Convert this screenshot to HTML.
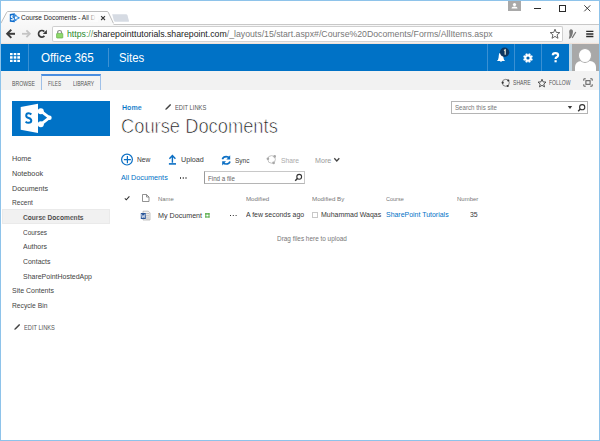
<!DOCTYPE html>
<html><head><meta charset="utf-8">
<style>
html,body{margin:0;padding:0;}
body{width:600px;height:441px;overflow:hidden;position:relative;background:#fff;font-family:"Liberation Sans",sans-serif;}
.a{position:absolute;}
.t{position:absolute;white-space:nowrap;line-height:1;transform-origin:0 0;}
</style></head><body>

<!-- window controls -->
<div class="a" style="left:508px;top:1px;width:13px;height:10px;background:#a9a9a9;"></div>
<svg class="a" style="left:508px;top:1px" width="13" height="10" viewBox="0 0 13 10"><circle cx="6.5" cy="3.6" r="1.6" fill="#fff"/><path d="M3.5 7.6Q3.5 5.6 6.5 5.6Q9.5 5.6 9.5 7.6Z" fill="#fff"/></svg>
<div class="a" style="left:534px;top:8px;width:7px;height:1px;background:#2a2a2a;"></div>
<div class="a" style="left:559px;top:5px;width:5px;height:5px;border:1px solid #2a2a2a;"></div>
<svg class="a" style="left:583px;top:4px" width="9" height="9"><path d="M1.3 1.3L7.3 7.3M7.3 1.3L1.3 7.3" stroke="#2a2a2a" stroke-width="0.9"/></svg>

<!-- toolbar -->
<div class="a" style="left:1px;top:24px;width:598px;height:20px;background:linear-gradient(#f8f8f8,#f1f1f1 90%,#eaeaea);"></div>
<div class="a" style="left:1px;top:24px;width:598px;height:1px;background:#c8c8c8;"></div>
<div class="a" style="left:1px;top:43px;width:598px;height:1px;background:#f0e2d9;"></div>
<!-- tab -->
<svg class="a" style="left:0;top:10px" width="140" height="15" viewBox="0 0 140 15">
  <defs><linearGradient id="tg" x1="0" y1="0" x2="0" y2="1"><stop offset="0" stop-color="#fefefe"/><stop offset="1" stop-color="#f8f8f8"/></linearGradient></defs>
  <path d="M0.5 14 L6.8 2.2 Q7.2 1.5 8 1.5 L107 1.5 Q107.8 1.5 108.2 2.2 L113.5 13.5" fill="url(#tg)" stroke="#bdbdbd" stroke-width="1"/>
  <rect x="0" y="13.2" width="113.5" height="2" fill="#f8f8f8"/>
  <path d="M112.2 4.2 L126 4.2 Q127 4.2 127.4 5 L129 11 Q129.2 11.8 128.4 11.8 L115.2 11.8 Q114.4 11.8 114 11 Z" fill="#d6dbe3"/>
</svg>
<!-- favicon -->
<svg class="a" style="left:9px;top:13px" width="11" height="10" viewBox="0 0 11 10">
  <path d="M0.8 0.9 L5.8 0.3 L5.8 9.3 L0.8 8.7Z" fill="#0e6ccc"/>
  <path d="M5.8 2 L9.8 4.8 L5.8 7.6" fill="none" stroke="#6fb0ea" stroke-width="1.3"/>
  <circle cx="6.6" cy="2.5" r=".9" fill="#2c86dc"/><circle cx="9.6" cy="4.8" r=".9" fill="#2c86dc"/><circle cx="6.6" cy="7.1" r=".9" fill="#2c86dc"/>
  <path d="M4.3 3.4 Q3.9 2.8 3.2 2.8 Q2.2 2.8 2.2 3.7 Q2.2 4.4 3.3 4.7 Q4.4 5 4.4 5.9 Q4.4 6.9 3.2 6.9 Q2.4 6.9 1.9 6.3" fill="none" stroke="#fff" stroke-width="1.1"/>
</svg>
<div class="a" style="left:86px;top:13px;width:12px;height:9px;background:linear-gradient(to right,rgba(253,253,253,0),#fcfcfc 85%);z-index:2"></div>
<svg class="a" style="left:100px;top:15px;z-index:3" width="6" height="6" viewBox="0 0 6 6"><path d="M1.1 1.1L5 5M5 1.1L1.1 5" stroke="#3a3a3a" stroke-width="1.1"/></svg>

<!-- nav buttons -->
<svg class="a" style="left:0;top:24px" width="56" height="18" viewBox="0 0 56 18">
  <path d="M7.2 9.8H15" stroke="#3c3c3c" stroke-width="2" fill="none"/>
  <path d="M10.6 6.4 L7.2 9.8 L10.6 13.2" stroke="#3c3c3c" stroke-width="2" fill="none" stroke-linecap="square"/>
  <path d="M22 9.8H29.8" stroke="#c4c4c4" stroke-width="1.8" fill="none"/>
  <path d="M26.4 6.4 L29.8 9.8 L26.4 13.2" stroke="#c4c4c4" stroke-width="1.8" fill="none"/>
  <path d="M44.4 11.9 A3.3 3.3 0 1 1 44.3 7.6" stroke="#3a3a3a" stroke-width="1.7" fill="none"/>
  <path d="M46.9 5.8 L46.9 9.9 L42.8 9.9Z" fill="#3a3a3a"/>
</svg>
<!-- address box -->
<div class="a" style="left:52px;top:26px;width:509px;height:14px;background:#fff;border:1px solid #cfcfcf;border-bottom-color:#d4d4d4;border-radius:2px;"></div>
<svg class="a" style="left:55px;top:29px" width="9" height="10" viewBox="0 0 9 10">
  <path d="M2.7 4.6V3.2Q2.7 1.5 4.6 1.5Q6.5 1.5 6.5 3.2V4.6" stroke="#8c8c8c" stroke-width="1.2" fill="none"/>
  <rect x="1.6" y="4.4" width="6.2" height="4.6" rx=".5" fill="#8fd86c" stroke="#62b046" stroke-width=".7"/>
</svg>
<svg class="a" style="left:549px;top:28px" width="12" height="12" viewBox="0 0 12 12"><path d="M6 1.2 L7.3 4.4 L10.8 4.6 L8.1 6.8 L9 10.3 L6 8.4 L3 10.3 L3.9 6.8 L1.2 4.6 L4.7 4.4Z" fill="#fff" stroke="#4a4a4a" stroke-width=".85" stroke-linejoin="round"/></svg>
<svg class="a" style="left:567px;top:28px" width="12" height="13" viewBox="0 0 12 13"><path d="M4.2 1.2 Q6.2 1.2 6 3.8 Q5.8 6 4.9 8 Q4 10.4 2.6 10.7 Q1.4 10.8 2.1 9.2 Q2.8 7.6 2.4 5.6 Q1.9 3.4 2.5 2.2 Q3 1.2 4.2 1.2Z" fill="#777"/><path d="M5.2 9.9 L8.8 4" stroke="#777" stroke-width="1.2"/></svg>
<svg class="a" style="left:586px;top:30px" width="8" height="8" viewBox="0 0 8 8"><path d="M.2 1.4H7.4M.2 4H7.4M.2 6.5H7.4" stroke="#2a2a2a" stroke-width="1.3"/></svg>

<!-- suite bar -->
<div class="a" style="left:1px;top:44px;width:568px;height:27px;background:#0072c6;"></div>
<div class="a" style="left:569px;top:44px;width:3px;height:27px;background:#c4d8e4;"></div>
<div class="a" style="left:572px;top:44px;width:27px;height:27px;background:#a8a8a8;overflow:hidden;">
  <div class="a" style="left:2.6px;top:16.8px;width:21.5px;height:14px;border-radius:6px 6px 0 0;background:#fff;"></div>
  <div class="a" style="left:5.9px;top:4.2px;width:14.2px;height:15px;border-radius:50%;background:#fff;border:1.1px solid #a8a8a8;box-sizing:border-box;"></div>
</div>
<!-- waffle -->
<svg class="a" style="left:9px;top:52px" width="12" height="11" viewBox="0 0 12 11"><g fill="#fff">
<rect x="1" y="1" width="2.6" height="2.2"/><rect x="4.7" y="1" width="2.6" height="2.2"/><rect x="8.3" y="1" width="2.7" height="2.2"/>
<rect x="1" y="4.2" width="2.6" height="2.5"/><rect x="4.7" y="4.2" width="2.6" height="2.5"/><rect x="8.3" y="4.2" width="2.7" height="2.5"/>
<rect x="1" y="7.8" width="2.6" height="2.2"/><rect x="4.7" y="7.8" width="2.6" height="2.2"/><rect x="8.3" y="7.8" width="2.7" height="2.2"/>
</g></svg>
<div class="a" style="left:28px;top:44px;width:1px;height:27px;background:#3a90d3;"></div>
<div class="a" style="left:108px;top:48px;width:1px;height:19px;background:#3d91d3;"></div>
<div class="a" style="left:487px;top:44px;width:1px;height:27px;background:#3a90d3;"></div>
<div class="a" style="left:514px;top:44px;width:1px;height:27px;background:#3a90d3;"></div>
<div class="a" style="left:541px;top:44px;width:1px;height:27px;background:#3a90d3;"></div>
<!-- bell -->
<svg class="a" style="left:494px;top:46px" width="18" height="18" viewBox="0 0 18 18">
  <path d="M2.8 15 Q4.4 14 4.6 11.5 L4.8 9.5 Q5 6.6 7 6.6 Q9 6.6 9.2 9.5 L9.4 11.5 Q9.6 14 11.2 15Z" fill="#fff"/>
  <path d="M5.8 15 Q7 16.4 8.2 15Z" fill="#fff"/>
  <circle cx="10.6" cy="6.3" r="4.7" fill="#0d3660"/>
  <path d="M10 4.6 L11.2 3.9 L11.2 8.8" stroke="#e8e8d8" stroke-width="1.2" fill="none"/>
</svg>
<!-- gear -->
<svg class="a" style="left:522.3px;top:51.8px" width="12" height="12" viewBox="0 0 12 12">
  <path d="M9.49 6.22 L10.81 6.94 L10.06 8.74 L8.63 8.31 L8.31 8.63 L8.74 10.06 L6.94 10.81 L6.22 9.49 L5.78 9.49 L5.06 10.81 L3.26 10.06 L3.69 8.63 L3.37 8.31 L1.94 8.74 L1.19 6.94 L2.51 6.22 L2.51 5.78 L1.19 5.06 L1.94 3.26 L3.37 3.69 L3.69 3.37 L3.26 1.94 L5.06 1.19 L5.78 2.51 L6.22 2.51 L6.94 1.19 L8.74 1.94 L8.31 3.37 L8.63 3.69 L10.06 3.26 L10.81 5.06 L9.49 5.78Z" fill="#fff"/>
  <circle cx="6" cy="6" r="1.6" fill="#0063b0"/>
</svg>
<svg class="a" style="left:551px;top:52px" width="9" height="11" viewBox="0 0 9 11">
  <path d="M1.8 3.2 Q1.8 1.2 4.4 1.2 Q7.1 1.2 7.1 3.2 Q7.1 4.6 5.6 5.3 Q4.6 5.8 4.6 7" stroke="#fff" stroke-width="2.2" fill="none"/>
  <rect x="3.5" y="8.2" width="2.2" height="2.1" fill="#fff"/>
</svg>

<!-- ribbon -->
<div class="a" style="left:1px;top:71px;width:598px;height:19px;background:#f2f2f2;"></div>
<div class="a" style="left:41px;top:74px;width:60px;height:16.4px;border:1px solid #9fc0e8;border-bottom:none;border-top:2px solid #4a8ee0;box-sizing:border-box;background:#f3f3f3;"></div>
<svg class="a" style="left:500px;top:78px" width="12" height="10" viewBox="0 0 12 10">
  <circle cx="5.8" cy="4.8" r="3.5" fill="none" stroke="#777" stroke-width=".9"/>
  <circle cx="8.3" cy="2.5" r="1.1" fill="#333"/><circle cx="2.7" cy="4.7" r="1.1" fill="#333"/><circle cx="7.7" cy="8" r="1.1" fill="#333"/>
</svg>
<svg class="a" style="left:537px;top:78px" width="10" height="10" viewBox="0 0 10 10"><path d="M5 1.2 L6.1 3.9 L9 4.1 L6.8 6 L7.5 8.9 L5 7.3 L2.5 8.9 L3.2 6 L1 4.1 L3.9 3.9Z" fill="none" stroke="#444" stroke-width=".9" stroke-linejoin="round"/></svg>
<svg class="a" style="left:582.5px;top:77.5px" width="10" height="9" viewBox="0 0 10 9"><path d="M.8 2.8V.8H2.8M7.2 .8H9.2V2.8M9.2 6.2V8.2H7.2M2.8 8.2H.8V6.2" fill="none" stroke="#555" stroke-width=".9"/><rect x="2.9" y="2.7" width="4.2" height="3.6" fill="none" stroke="#555" stroke-width="1"/></svg>

<!-- logo -->
<div class="a" style="left:12px;top:101px;width:98px;height:35px;background:#0072c6;"></div>
<svg class="a" style="left:16px;top:100px" width="40" height="36" viewBox="0 0 40 36">
  <path d="M4.7 6.9 L22 3.7 L22 33 L4.7 29.8Z" fill="#fff"/>
  <path d="M15.3 14.5 Q14.3 13.3 12.6 13.3 Q10.2 13.3 10.2 15.7 Q10.2 17.3 12.7 18 Q15.3 18.8 15.3 20.6 Q15.3 22.8 12.5 22.8 Q10.7 22.8 9.6 21.6" fill="none" stroke="#0072c6" stroke-width="2"/>
  <path d="M24.9 11.2 L33.4 17.7 L24.9 24.3" fill="none" stroke="#fff" stroke-width="2.8" stroke-linejoin="round"/>
  <circle cx="24.8" cy="11.2" r="3" fill="#fff"/><circle cx="33.5" cy="17.7" r="2.2" fill="#fff"/><circle cx="24.8" cy="24.3" r="3" fill="#fff"/>
</svg>

<!-- breadcrumb -->
<svg class="a" style="left:164px;top:103px" width="8" height="8" viewBox="0 0 8 8"><path d="M1.2 6.8 L1.6 5.4 L5.6 1.4 Q6.2 0.8 6.8 1.4 Q7.3 2 6.7 2.5 L2.7 6.5Z" fill="#444"/></svg>

<!-- search box -->
<div class="a" style="left:451px;top:101px;width:135px;height:11px;border:1px solid #b4b4b4;background:#fff;"></div>
<svg class="a" style="left:567px;top:105px" width="6" height="5" viewBox="0 0 6 5"><path d="M.8 1H5.2L3 4Z" fill="#3c3c3c"/></svg>
<svg class="a" style="left:577px;top:102.5px" width="10" height="10" viewBox="0 0 10 10"><circle cx="5.2" cy="4.2" r="2.6" fill="none" stroke="#333" stroke-width="1.1"/><path d="M3.3 6.1 L1.2 8.2" stroke="#333" stroke-width="1.4"/></svg>

<!-- left nav -->
<div class="a" style="left:2px;top:209px;width:108px;height:15px;background:#f1f1f1;box-shadow:inset 0 0 0 1px #eaeaea;"></div>
<svg class="a" style="left:12.5px;top:323px" width="8" height="8" viewBox="0 0 8 8"><path d="M1.2 6.8 L1.6 5.4 L5.6 1.4 Q6.2 0.8 6.8 1.4 Q7.3 2 6.7 2.5 L2.7 6.5Z" fill="#444"/></svg>

<!-- command bar -->
<svg class="a" style="left:120px;top:153px" width="14" height="14" viewBox="0 0 14 14"><circle cx="7" cy="6.6" r="5.4" fill="none" stroke="#0b6fc4" stroke-width="1.2"/><path d="M7.4 3.1V10.3M3.9 6.6H10.9" stroke="#0b6fc4" stroke-width="1.2"/></svg>
<svg class="a" style="left:166px;top:152px" width="12" height="14" viewBox="0 0 12 14"><path d="M6.4 3.6V10.8M3.4 6.8L6.4 3.6L9.4 6.8" fill="none" stroke="#0b6fc4" stroke-width="1.4"/><path d="M2.9 11.9H10" stroke="#0b6fc4" stroke-width="1.6"/></svg>
<svg class="a" style="left:220px;top:153px" width="13" height="14" viewBox="0 0 13 14">
  <path d="M2.4 6.2 Q3.2 3.6 6.2 3.6 Q8.4 3.6 9.3 4.8" fill="none" stroke="#0b6fc4" stroke-width="1.6"/>
  <path d="M10.2 2.2 V6.4 H6.4Z" fill="#0b6fc4"/>
  <path d="M10 8.4 Q9.2 11 6.2 11 Q4 11 3.1 9.8" fill="none" stroke="#0b6fc4" stroke-width="1.6"/>
  <path d="M2.2 12.4 V8.2 H6Z" fill="#0b6fc4"/>
</svg>
<svg class="a" style="left:264px;top:152px" width="15" height="15" viewBox="0 0 15 15">
  <circle cx="7.6" cy="7.4" r="3.8" fill="none" stroke="#c4c4c4" stroke-width="1"/>
  <circle cx="10.7" cy="4.4" r="1.3" fill="#a8a8a8"/><circle cx="3.9" cy="6.7" r="1.3" fill="#a8a8a8"/><circle cx="9.6" cy="10.9" r="1.3" fill="#a8a8a8"/>
</svg>
<svg class="a" style="left:333px;top:157px" width="8" height="6" viewBox="0 0 8 6"><path d="M1.3 1.3L3.8 4L6.3 1.3" fill="none" stroke="#444" stroke-width="1.3"/></svg>

<div class="a" style="left:179.5px;top:177.1px;width:1.5px;height:1.5px;background:#555;box-shadow:2.75px 0 #555,5.5px 0 #555;"></div>
<div class="a" style="left:204px;top:171px;width:99px;height:11px;border:1px solid #c8c8c8;border-left-color:#9a9a9a;border-bottom-color:#b5b5b5;background:#fff;"></div>
<svg class="a" style="left:294px;top:173px" width="9" height="9" viewBox="0 0 9 9"><circle cx="5.2" cy="3.8" r="2.4" fill="none" stroke="#333" stroke-width="1.1"/><path d="M3.4 5.6 L1.2 7.8" stroke="#333" stroke-width="1.4"/></svg>

<!-- list header -->
<svg class="a" style="left:123px;top:195px" width="8" height="7" viewBox="0 0 8 7"><path d="M1.8 3.4L3.3 4.8L6.4 1.3" fill="none" stroke="#333" stroke-width="1.1"/></svg>
<svg class="a" style="left:141px;top:193px" width="10" height="10" viewBox="0 0 10 10"><path d="M1.5 1.5H5.5L8 4V8.5H1.5Z M5.5 1.5V4H8" fill="none" stroke="#777" stroke-width=".8"/></svg>

<!-- row -->
<svg class="a" style="left:140px;top:210px" width="11" height="11" viewBox="0 0 11 11">
  <path d="M3 1.2 H8.3 L10 2.9 V10 H3Z" fill="#f4f4f4" stroke="#9a9a9a" stroke-width=".6"/>
  <path d="M6 3.5H9M6 5.3H9M6 7.1H9M6 8.9H9" stroke="#aaa" stroke-width=".7"/>
  <rect x="0.8" y="3" width="5" height="6" fill="#2a5699"/>
  <path d="M1.6 4.2 L2.3 7.8 L3.2 5.4 L4.1 7.8 L4.9 4.2" fill="none" stroke="#fff" stroke-width=".7"/>
</svg>
<svg class="a" style="left:204px;top:212px" width="7" height="7" viewBox="0 0 7 7"><path d="M1.2 1.8H5.6M1.2 5H5.6" stroke="#4aa53a" stroke-width="1.2"/><path d="M1.8 1.2V5.6M5 1.2V5.6" stroke="#4aa53a" stroke-width=".9"/></svg>
<div class="a" style="left:229.6px;top:214.8px;width:1.4px;height:1.4px;background:#333;box-shadow:2.8px 0 #333,5.6px 0 #333;"></div>
<div class="a" style="left:312px;top:212px;width:4px;height:4px;border:1px solid #c8c8c8;"></div>


<div class="t" style="left:21.0px;top:14.0px;font-size:7.0px;color:#1e1e1e;transform:scaleX(0.925);">Course Docoments - All D</div>
<div class="t" style="left:67.0px;top:30.0px;font-size:8.7px;color:#777;transform:scaleX(1.005);"><span style="color:#2a8a2a">https</span><span style="color:#5a9a5a">://</span><span style="color:#222">sharepointtutorials.sharepoint.com</span>/_layouts/15/start.aspx#/Course%20Docoments/Forms/AllItems.aspx</div>
<div class="t" style="left:40.5px;top:51.8px;font-size:12.3px;color:#fff;transform:scaleX(0.946);">Office 365</div>
<div class="t" style="left:118.88px;top:51.8px;font-size:12.3px;color:#fff;transform:scaleX(0.923);">Sites</div>
<div class="t" style="left:12.0px;top:80.9px;font-size:6.8px;color:#555;transform:scaleX(0.757);">BROWSE</div>
<div class="t" style="left:47.9px;top:80.9px;font-size:6.8px;color:#555;transform:scaleX(0.689);">FILES</div>
<div class="t" style="left:72.8px;top:80.9px;font-size:6.8px;color:#555;transform:scaleX(0.731);">LIBRARY</div>
<div class="t" style="left:513.0px;top:80.0px;font-size:6.8px;color:#555;transform:scaleX(0.752);">SHARE</div>
<div class="t" style="left:549.3px;top:80.0px;font-size:6.8px;color:#555;transform:scaleX(0.748);">FOLLOW</div>
<div class="t" style="left:121.9px;top:103.75px;font-size:7.0px;color:#0072c6;font-weight:700;transform:scaleX(1.011);-webkit-text-stroke:0.12px #fff;">Home</div>
<div class="t" style="left:175.0px;top:104.8px;font-size:6.7px;color:#555;transform:scaleX(0.861);">EDIT LINKS</div>
<div class="t" style="left:121.08px;top:116.2px;font-size:20.0px;color:#4a4a4a;transform:scaleX(0.916);-webkit-text-stroke:0.7px #fff;color:#111;">Course Docoments</div>
<div class="t" style="left:454.8px;top:104.8px;font-size:6.6px;color:#777;transform:scaleX(0.931);">Search this site</div>
<div class="t" style="left:11.8px;top:154.9px;font-size:7.2px;color:#424242;transform:scaleX(1.005);">Home</div>
<div class="t" style="left:11.8px;top:169.6px;font-size:7.2px;color:#424242;transform:scaleX(1.01);">Notebook</div>
<div class="t" style="left:11.8px;top:184.5px;font-size:7.2px;color:#424242;transform:scaleX(0.992);">Documents</div>
<div class="t" style="left:11.8px;top:199.1px;font-size:7.2px;color:#424242;transform:scaleX(0.917);">Recent</div>
<div class="t" style="left:23.1px;top:213.9px;font-size:7.2px;color:#333;font-weight:700;transform:scaleX(0.918);-webkit-text-stroke:0.15px #f1f1f1;color:#2a2a2a;">Course Docoments</div>
<div class="t" style="left:23.1px;top:228.6px;font-size:7.2px;color:#424242;transform:scaleX(0.9);">Courses</div>
<div class="t" style="left:23.1px;top:243.1px;font-size:7.2px;color:#424242;transform:scaleX(0.972);">Authors</div>
<div class="t" style="left:23.1px;top:258.0px;font-size:7.2px;color:#424242;transform:scaleX(0.964);">Contacts</div>
<div class="t" style="left:23.1px;top:272.9px;font-size:7.2px;color:#424242;transform:scaleX(0.97);">SharePointHostedApp</div>
<div class="t" style="left:11.8px;top:287.2px;font-size:7.2px;color:#424242;transform:scaleX(0.972);">Site Contents</div>
<div class="t" style="left:11.8px;top:301.9px;font-size:7.2px;color:#424242;transform:scaleX(0.932);">Recycle Bin</div>
<div class="t" style="left:24.0px;top:324.7px;font-size:6.8px;color:#555;transform:scaleX(0.835);">EDIT LINKS</div>
<div class="t" style="left:136.7px;top:156.3px;font-size:7.0px;color:#3a3a3a;transform:scaleX(0.95);">New</div>
<div class="t" style="left:180.7px;top:156.3px;font-size:7.0px;color:#3a3a3a;transform:scaleX(1.023);">Upload</div>
<div class="t" style="left:235.2px;top:156.6px;font-size:7.0px;color:#3a3a3a;transform:scaleX(0.933);">Sync</div>
<div class="t" style="left:280.7px;top:156.6px;font-size:7.0px;color:#aaa;transform:scaleX(0.961);">Share</div>
<div class="t" style="left:314.7px;top:156.6px;font-size:7.0px;color:#999;transform:scaleX(1.019);">More</div>
<div class="t" style="left:121.3px;top:174.4px;font-size:7.0px;color:#0072c6;transform:scaleX(1.036);">All Documents</div>
<div class="t" style="left:207.9px;top:174.8px;font-size:7.2px;color:#666;transform:scaleX(0.861);">Find a file</div>
<div class="t" style="left:157.8px;top:197.0px;font-size:5.8px;color:#777;transform:scaleX(1.013);">Name</div>
<div class="t" style="left:245.6px;top:196.9px;font-size:5.8px;color:#777;transform:scaleX(1.059);">Modified</div>
<div class="t" style="left:312.0px;top:196.9px;font-size:5.8px;color:#777;transform:scaleX(1.067);">Modified By</div>
<div class="t" style="left:386.2px;top:196.8px;font-size:5.8px;color:#777;transform:scaleX(0.947);">Course</div>
<div class="t" style="left:457.0px;top:196.8px;font-size:5.8px;color:#777;transform:scaleX(1.033);">Number</div>
<div class="t" style="left:158.3px;top:212.2px;font-size:7.4px;color:#363636;transform:scaleX(0.967);">My Document</div>
<div class="t" style="left:245.6px;top:210.7px;font-size:7.4px;color:#363636;transform:scaleX(0.937);">A few seconds ago</div>
<div class="t" style="left:320.9px;top:210.7px;font-size:7.4px;color:#363636;transform:scaleX(0.944);">Muhammad Waqas</div>
<div class="t" style="left:386.2px;top:210.7px;font-size:7.4px;color:#0072c6;transform:scaleX(0.941);">SharePoint Tutorials</div>
<div class="t" style="left:470.3px;top:210.7px;font-size:7.4px;color:#363636;transform:scaleX(0.938);">35</div>
<div class="t" style="left:277.1px;top:236.1px;font-size:7.1px;color:#777;transform:scaleX(0.904);">Drag files here to upload</div>
<div class="a" style="left:0;top:0;width:600px;height:441px;box-sizing:border-box;border:1px solid #8ec3ea;"></div>
</body></html>
